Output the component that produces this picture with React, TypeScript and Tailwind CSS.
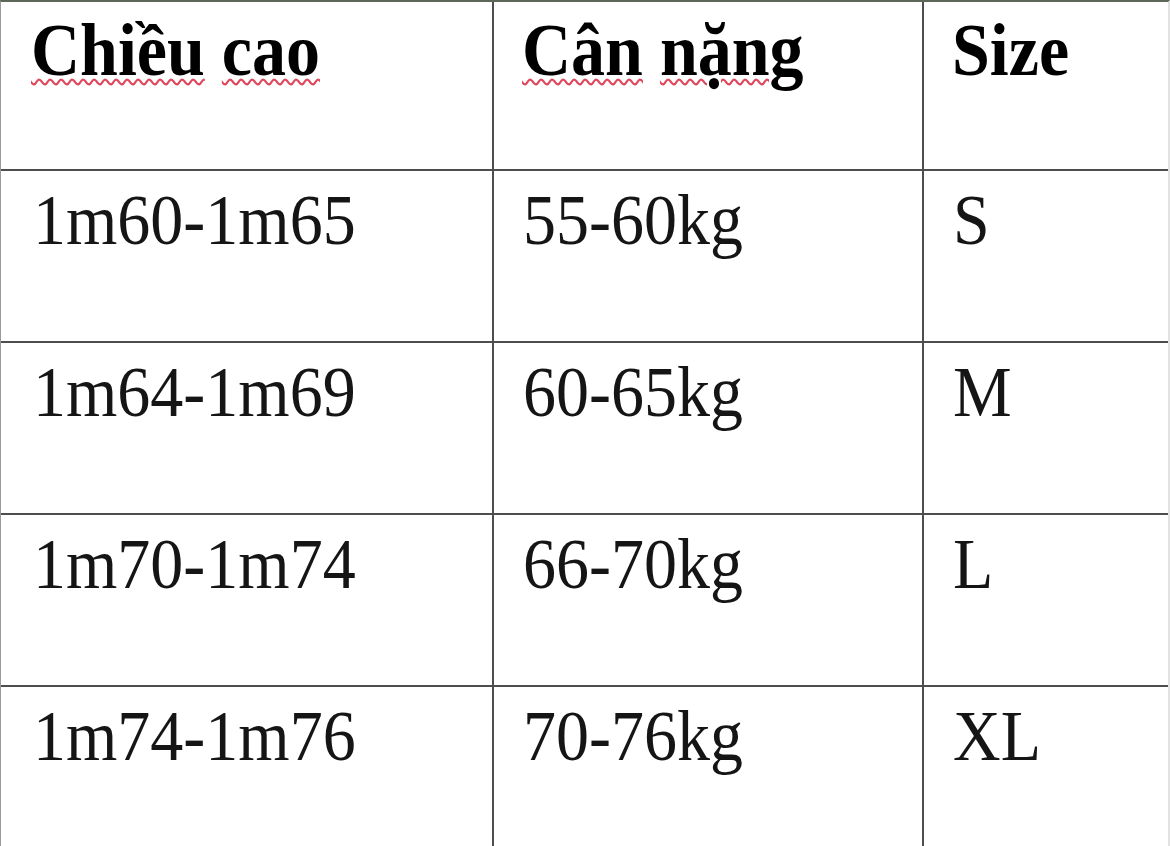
const rows = [
  ["1m60-1m65", "55-60kg", "S"],
  ["1m64-1m69", "60-65kg", "M"],
  ["1m70-1m74", "66-70kg", "L"],
  ["1m74-1m76", "70-76kg", "XL"],
];

const serif = { fontFamily: '"Liberation Serif", "Times New Roman", serif' };

// red spell-check squiggle under a single word
const Squiggle = ({ children }: { children: string }) => (
  <span className="underline decoration-wavy decoration-[#e0475c] decoration-[2px] underline-offset-[3px]">
    {children}
  </span>
);

const Tall = ({ children, k = "body" }: { children: React.ReactNode; k?: "head" | "body" }) => (
  <span className={k === "head" ? "inline-block origin-bottom scale-y-[1.1]" : "inline-block origin-bottom scale-y-[1.09]"}>
    {children}
  </span>
);

const App = () => {
  return (
    <div className="w-[1170px] h-[846px] overflow-hidden bg-white">
      <div
        className="border-t-2 border-l border-r-2 border-t-[#5d6659] border-l-[#9a9a9a] border-r-[#e2e2e2]"
        style={serif}
      >
        {/* header */}
        <div className="grid grid-cols-[493px_430px_1fr] h-[169px] border-b-2 border-[#4d4d4d] text-[68px] leading-none font-bold text-black">
          <div className="border-r-2 border-[#4d4d4d] pl-[30px] pt-[17px]">
            <Tall k="head">
              <Squiggle>Chiều</Squiggle> <Squiggle>cao</Squiggle>
            </Tall>
          </div>
          <div className="border-r-2 border-[#4d4d4d] pl-[28px] pt-[17px]">
            <Tall k="head">
              <Squiggle>Cân</Squiggle> <Squiggle>nặng</Squiggle>
            </Tall>
          </div>
          <div className="pl-[28px] pt-[17px]">
            <Tall k="head">Size</Tall>
          </div>
        </div>

        {/* body rows */}
        {rows.map((r) => (
          <div
            key={r[0]}
            className="grid grid-cols-[493px_430px_1fr] h-[172px] border-b-2 border-[#4d4d4d] text-[66px] leading-none text-[#151515]"
          >
            <div className="border-r-2 border-[#4d4d4d] pl-[32px] pt-[19px]">
              <Tall>{r[0]}</Tall>
            </div>
            <div className="border-r-2 border-[#4d4d4d] pl-[29px] pt-[19px]">
              <Tall>{r[1]}</Tall>
            </div>
            <div className="pl-[29px] pt-[19px]">
              <Tall>{r[2]}</Tall>
            </div>
          </div>
        ))}
      </div>
    </div>
  );
};

export default App;
